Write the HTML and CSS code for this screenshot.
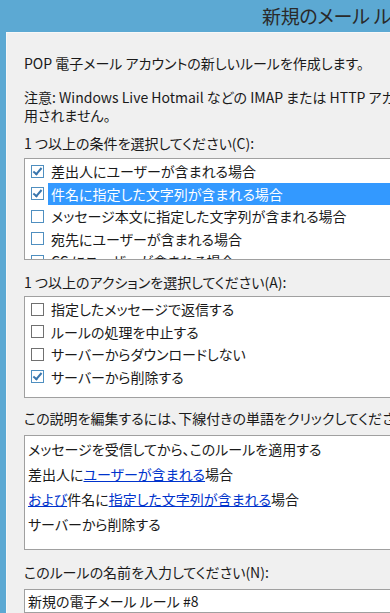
FILE: index.html
```html
<!DOCTYPE html>
<html lang="ja">
<head>
<meta charset="utf-8">
<link rel="stylesheet" href="styles.css">
</head>
<body>
<div class="frame">
  <div class="titlebar"><span class="title">新規のメール ルール</span></div>
  <div class="panel">
    <p class="intro">POP 電子メール アカウントの新しいルールを作成します。</p>
    <p class="note">注意: Windows Live Hotmail などの IMAP または HTTP アカウントには適<br>用されません。</p>
    <div class="label l-cond">1 つ以上の条件を選択してください(C):</div>
    <div class="listbox list-cond">
      <div class="row"><span class="cb on focus"></span><span class="txt">差出人にユーザーが含まれる場合</span></div>
      <div class="row"><span class="cb on focus"></span><span class="txt sel">件名に指定した文字列が含まれる場合</span></div>
      <div class="row"><span class="cb focus"></span><span class="txt">メッセージ本文に指定した文字列が含まれる場合</span></div>
      <div class="row"><span class="cb focus"></span><span class="txt">宛先にユーザーが含まれる場合</span></div>
      <div class="row"><span class="cb focus"></span><span class="txt">CC にユーザーが含まれる場合</span></div>
    </div>
    <div class="label l-act">1 つ以上のアクションを選択してください(A):</div>
    <div class="listbox list-act">
      <div class="row"><span class="cb"></span><span class="txt">指定したメッセージで返信する</span></div>
      <div class="row"><span class="cb"></span><span class="txt">ルールの処理を中止する</span></div>
      <div class="row"><span class="cb"></span><span class="txt">サーバーからダウンロードしない</span></div>
      <div class="row"><span class="cb on focus"></span><span class="txt">サーバーから削除する</span></div>
    </div>
    <div class="label l-desc">この説明を編集するには、下線付きの単語をクリックしてください(D):</div>
    <div class="descbox">
      <div class="dline">メッセージを受信してから、このルールを適用する</div>
      <div class="dline">差出人に<a class="lnk">ユーザーが含まれる</a>場合</div>
      <div class="dline"><a class="lnk">および</a>件名に<a class="lnk">指定した文字列が含まれる</a>場合</div>
      <div class="dline">サーバーから削除する</div>
    </div>
    <div class="label l-name">このルールの名前を入力してください(N):</div>
    <div class="inputbox">新規の電子メール ルール #8</div>
  </div>
</div>
</body>
</html>
```

FILE: styles.css
```css
html, body {
  margin: 0;
  padding: 0;
  height: 100%;
  overflow: hidden;
}
body {
  background: #5ca9d3;
  font-family: "Noto Sans CJK JP", "Noto Sans", sans-serif;
  font-feature-settings: "palt";
  font-size: 14px;
  color: #1a1a1a;
}
.frame {
  display: flex;
  flex-direction: column;
  height: 100%;
}
.titlebar {
  height: 32px;
  flex: none;
  white-space: nowrap;
  overflow: hidden;
  padding-left: 262px;
  box-sizing: border-box;
}
.title {
  font-size: 19px;
  line-height: 32px;
  font-weight: 400;
  color: #2a2a2a;
  letter-spacing: -0.3px;
}
.panel {
  flex: 1;
  margin-left: 6px;
  background: #f0f0f0;
  border-left: 1px solid #f8f8f8;
  border-top: 1px solid #f8f8f8;
  padding: 21px 0 0 17px;
  white-space: nowrap;
  overflow: hidden;
}
p { margin: 0; }
.intro { line-height: 18px; }
.note { line-height: 18px; margin-top: 16px; }
.label { line-height: 18px; }
.l-cond { margin-top: 10px; }
.listbox {
  background: #fff;
  border: 1px solid #a0a0a0;
  border-right: none;
  overflow: hidden;
  box-sizing: border-box;
  padding-top: 1px;
}
.list-cond { margin-top: 6px; height: 102px; }
.l-act { margin-top: 13px; }
.list-act { margin-top: 5px; height: 102px; }
.row {
  display: flex;
  align-items: center;
  height: 22.5px;
}
.cb {
  flex: none;
  width: 11px;
  height: 11px;
  border: 1px solid #707070;
  background: #fff;
  margin-left: 6px;
  margin-right: 4px;
  position: relative;
}
.cb.focus { border-color: #4f8fc0; }
.cb.on::after {
  content: "";
  position: absolute;
  left: 3px;
  top: 0px;
  width: 3px;
  height: 7px;
  border-right: 2px solid #3a76ad;
  border-bottom: 2px solid #3a76ad;
  transform: rotate(40deg);
}
.txt {
  line-height: 22px;
  padding-left: 3px;
}
.txt.sel {
  background: #3399ff;
  color: #fff;
  flex: 1;
}
.l-desc { margin-top: 11px; }
.descbox {
  margin-top: 8px;
  background: #fff;
  border: 1px solid #a0a0a0;
  border-right: none;
  height: 115px;
  box-sizing: border-box;
  padding: 1px 0 0 3px;
}
.dline { line-height: 25px; }
.lnk {
  color: #0033cc;
  text-decoration: underline;
}
.l-name { margin-top: 13px; }
.inputbox {
  margin-top: 8px;
  background: #fff;
  border: 1px solid #a0a0a0;
  border-right: none;
  height: 24px;
  box-sizing: border-box;
  padding-left: 3px;
  line-height: 22px;
}
```
